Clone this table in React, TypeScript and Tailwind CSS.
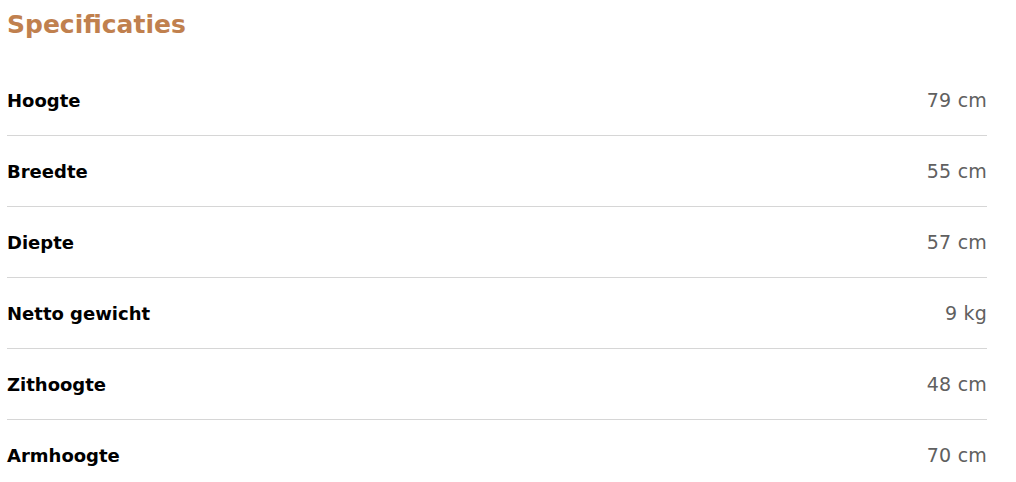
const specs = [
  { label: "Hoogte", value: "79 cm" },
  { label: "Breedte", value: "55 cm" },
  { label: "Diepte", value: "57 cm" },
  { label: "Netto gewicht", value: "9 kg" },
  { label: "Zithoogte", value: "48 cm" },
  { label: "Armhoogte", value: "70 cm" },
];

const App = () => {
  return (
    <div className="bg-white min-h-screen pl-[7px] w-[987px] font-['DejaVu_Sans',sans-serif]">
      <h2 className="pt-[8px] text-[25px] leading-[34px] font-bold text-[#c0804e] mb-[23px]">
        Specificaties
      </h2>
      <div className="flex flex-col">
        {specs.map((s, i) => (
          <div
            key={s.label}
            className={
              "flex justify-between items-center h-[71px] " +
              (i < specs.length - 1 ? "border-b border-[#d6d6d6]" : "")
            }
          >
            <span className="text-[18px] font-bold text-black">{s.label}</span>
            <span className="text-[19px] font-normal tracking-[0.2px] text-[#606060]">{s.value}</span>
          </div>
        ))}
      </div>
    </div>
  );
};

export default App;
